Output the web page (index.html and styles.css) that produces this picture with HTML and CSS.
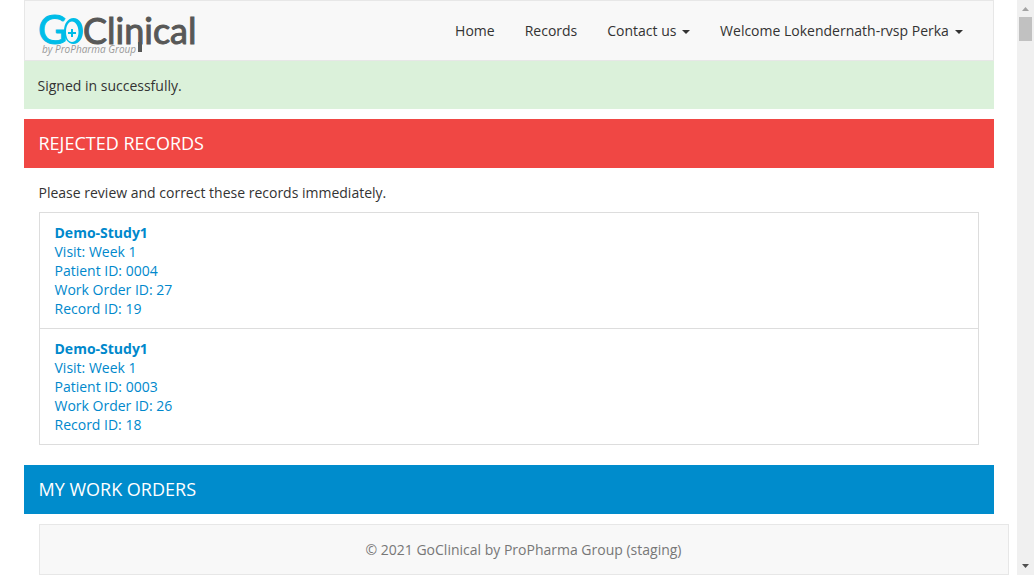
FILE: index.html
```html
<!DOCTYPE html>
<html lang="en">
<head>
<meta charset="utf-8">
<meta name="viewport" content="width=device-width, initial-scale=1">
<title>GoClinical</title>
<link rel="stylesheet" href="styles.css">
</head>
<body>
<div class="page">
  <div class="container">
    <header class="navbar">
      <a class="brand" href="#" aria-label="GoClinical by ProPharma Group">
        <svg class="logo" width="160" height="50" viewBox="0 0 160 50">
          <text class="logo-go" x="-2" y="38">G</text>
          <path class="logo-ring" fill-rule="evenodd" d="M33.500 12C39 12 43 17.500 43 25S39 38 33.500 38 24 32.500 24 25 28 12 33.500 12zM32 15.500C28.500 15.500 26 20 26 26S28.500 36 32 36 38.500 32 38.500 26 35.500 15.500 32 15.500z"/>
          <path class="logo-plus" d="M28 27h8M32 23v8"/>
          <text class="logo-clinical" x="43" y="38">Clinical</text>
          <path class="logo-tail" d="M100 36v10"/>
          <text class="logo-by" x="2" y="47">by ProPharma Group</text>
        </svg>
      </a>
      <nav class="links">
        <a href="#">Home</a>
        <a href="#">Records</a>
        <a href="#">Contact us <span class="caret"></span></a>
        <a href="#">Welcome Lokendernath-rvsp Perka <span class="caret"></span></a>
      </nav>
    </header>
    <div class="notice" role="status">Signed in successfully.</div>
    <main>
      <h2 class="heading heading-rejected">REJECTED RECORDS</h2>
      <section class="panel">
        <p class="hint">Please review and correct these records immediately.</p>
        <div class="records">
          <a class="record" href="#">
            <strong>Demo-Study1</strong>
            <span>Visit: Week 1</span>
            <span>Patient ID: 0004</span>
            <span>Work Order ID: 27</span>
            <span>Record ID: 19</span>
          </a>
          <a class="record" href="#">
            <strong>Demo-Study1</strong>
            <span>Visit: Week 1</span>
            <span>Patient ID: 0003</span>
            <span>Work Order ID: 26</span>
            <span>Record ID: 18</span>
          </a>
        </div>
      </section>
      <h2 class="heading heading-orders">MY WORK ORDERS</h2>
    </main>
    <footer class="footer">© 2021 GoClinical by ProPharma Group (staging)</footer>
  </div>
</div>
<div class="scrollbar" aria-hidden="true">
  <svg class="arrow" width="17" height="17" viewBox="0 0 17 17"><path fill="#a3a3a3" d="M5 11h7L8.500 7z"/></svg>
  <div class="thumb"></div>
  <svg class="arrow arrow-down" width="17" height="17" viewBox="0 0 17 17"><path fill="#505050" d="M5 6h7l-3.500 4z"/></svg>
</div>
</body>
</html>
```
FILE: styles.css
```css
* {
  box-sizing: border-box;
}

body {
  margin: 0;
  display: flex;
  min-height: 100vh;
  background: #fff;
  color: #333;
  font: 14px/19px "Open Sans", "Noto Sans", sans-serif;
}

a {
  color: #0088cc;
  text-decoration: none;
}

.page {
  flex: 1;
  min-width: 0;
}

.container {
  max-width: 970px;
  margin: 0 auto;
}

.navbar {
  display: flex;
  justify-content: space-between;
  align-items: center;
  padding: 0 15px;
  background: #f8f8f8;
  border: 1px solid #e7e7e7;
}

.logo {
  display: block;
  overflow: visible;
}

.logo-go,
.logo-clinical {
  font-family: Lato, "Open Sans", sans-serif;
  font-size: 36px;
}

.logo-go {
  fill: #00bde8;
  stroke: #00bde8;
  font-size: 40px;
}

.logo-ring {
  fill: #00bde8;
}

.logo-plus {
  fill: none;
  stroke: #00bde8;
  stroke-width: 2;
}

.logo-clinical {
  fill: #585857;
  stroke: #585857;
}

.logo-tail {
  fill: none;
  stroke: #585857;
  stroke-width: 4;
}

.logo-by {
  fill: #999;
  font: italic 10px "Open Sans", sans-serif;
}

.links {
  display: flex;
}

.links a {
  padding: 20px 15px;
  color: #333;
  white-space: nowrap;
}

.caret {
  display: inline-block;
  margin-left: 2px;
  vertical-align: middle;
  border-top: 4px solid #333;
  border-right: 4px solid transparent;
  border-left: 4px solid transparent;
}

.notice {
  margin-bottom: 10px;
  padding: 15px 14px 14px;
  background: #dbf1da;
}

.heading {
  margin: 0;
  padding: 15px;
  color: #fff;
  font-size: 18px;
  font-weight: 400;
  line-height: 19px;
}

.heading-rejected {
  background: #f04744;
}

.heading-orders {
  background: #008ccc;
}

.panel {
  padding: 15px 15px 20px;
}

.hint {
  margin: 0 0 10px;
}

.records {
  border: 1px solid #ddd;
}

.record {
  display: flex;
  flex-direction: column;
  padding: 10px 15px;
}

.record + .record {
  border-top: 1px solid #ddd;
}

.footer {
  margin: 10px -15px 0 15px;
  padding: 15px;
  background: #f8f8f8;
  border: 1px solid #e7e7e7;
  color: #777;
  text-align: center;
}

.scrollbar {
  display: flex;
  flex-direction: column;
  width: 17px;
  background: #f0f0f0;
}

.arrow {
  display: block;
}

.arrow-down {
  margin-top: auto;
}

.thumb {
  height: 24px;
  margin: 0 2px;
  background: #c1c1c1;
}
```
